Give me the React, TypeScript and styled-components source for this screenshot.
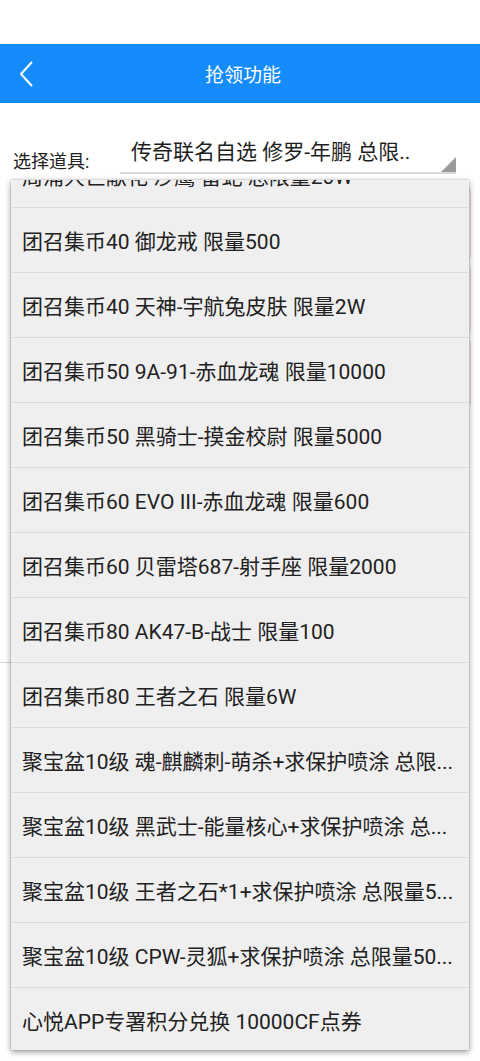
import React, { useLayoutEffect, useRef } from 'react';
import styled, { createGlobalStyle } from 'styled-components';

const GlobalStyle = createGlobalStyle`
  html, body {
    margin: 0;
    padding: 0;
    background: #ffffff;
  }
  body {
    font-family: Roboto, "Noto Sans CJK SC", "Noto Sans", sans-serif;
    color: #212121;
  }
  * {
    box-sizing: border-box;
  }
`;

const items = [
  "传奇联名自选 修罗-年鹏 总限量100",
  "周浦大巨献花 沙鹰 雷蛇 总限量20W",
  "团召集币40 御龙戒 限量500",
  "团召集币40 天神-宇航兔皮肤 限量2W",
  "团召集币50 9A-91-赤血龙魂 限量10000",
  "团召集币50 黑骑士-摸金校尉 限量5000",
  "团召集币60 EVO III-赤血龙魂 限量600",
  "团召集币60 贝雷塔687-射手座 限量2000",
  "团召集币80 AK47-B-战士 限量100",
  "团召集币80 王者之石 限量6W",
  "聚宝盆10级 魂-麒麟刺-萌杀+求保护喷涂 总限...",
  "聚宝盆10级 黑武士-能量核心+求保护喷涂 总...",
  "聚宝盆10级 王者之石*1+求保护喷涂 总限量5...",
  "聚宝盆10级 CPW-灵狐+求保护喷涂 总限量50...",
  "心悦APP专署积分兑换 10000CF点券",
];

const Page = styled.div`
  position: relative;
  width: 480px;
  min-height: 1061px;
  overflow: hidden;
`;

const StatusSpace = styled.div`
  height: 44px;
  background: #ffffff;
`;

const Header = styled.header`
  height: 59px;
  background: #168cfc;
  display: grid;
  grid-template-columns: 60px 1fr 60px;
  align-items: center;
`;

const BackButton = styled.button`
  border: none;
  background: transparent;
  padding: 0 0 0 19px;
  height: 100%;
  display: flex;
  align-items: center;
  cursor: pointer;
`;

const Title = styled.h1`
  margin: 0;
  text-align: center;
  color: #ffffff;
  font-size: 19px;
  font-weight: 400;
  padding-left: 6px;
`;

const Form = styled.div`
  padding: 32px 9px 0 13px;
`;

const SelectRow = styled.div`
  display: flex;
  align-items: flex-end;
  height: 39px;
`;

const Label = styled.span`
  font-size: 18px;
  width: 107px;
  line-height: 1;
  padding-bottom: 3px;
  color: #222;
`;

const SelectBox = styled.div`
  position: relative;
  width: 336px;
  height: 39px;
  border-bottom: 2px solid #d8d8d8;
  padding: 3px 0 0 11px;
  font-size: 21px;
  line-height: 28px;
  color: #1e1e1e;
  white-space: nowrap;
`;

const Caret = styled.span`
  position: absolute;
  right: 0;
  bottom: 0;
  width: 0;
  height: 0;
  border-left: 15px solid transparent;
  border-bottom: 15px solid #9a9a9a;
`;

const FieldList = styled.div`
  margin-top: 15px;
  display: flex;
  flex-direction: column;
  gap: 8px;
  padding-left: 107px;
`;

const Field = styled.div<{ $h: number }>`
  height: ${(p) => p.$h}px;
  border: 1px solid #e8d2d2;
  border-radius: 3px;
`;

const Divider = styled.div`
  margin-top: 257px;
  margin-left: -13px;
  width: 200px;
  height: 1px;
  background: #d2d2d2;
`;

const Dropdown = styled.div`
  position: absolute;
  top: 180px;
  left: 11px;
  width: 458px;
  height: 870px;
  background: #efefef;
  box-shadow: 0 2px 6px rgba(0, 0, 0, 0.4), 0 0 2px rgba(0, 0, 0, 0.2);
  overflow-y: auto;
  scrollbar-width: none;
  &::-webkit-scrollbar {
    display: none;
  }
`;

const Option = styled.div`
  height: 65px;
  display: flex;
  align-items: center;
  padding: 0 4px 0 11px;
  border-top: 1px solid #dcdcdc;
  font-size: 21px;
  color: #212121;
  white-space: nowrap;
  overflow: hidden;
  &:first-child {
    border-top: none;
  }
`;

const BackIcon = () => (
  <svg width="14" height="26" viewBox="0 0 14 26">
    <path d="M12.5 1.5 L2 13 L12.5 24.5" fill="none" stroke="#ffffff" strokeWidth="2" strokeLinecap="round" strokeLinejoin="round" />
  </svg>
);

export default function App() {
  const listRef = useRef<HTMLDivElement>(null);

  useLayoutEffect(() => {
    if (listRef.current) listRef.current.scrollTop = 103;
  }, []);

  return (
    <Page>
      <GlobalStyle />
      <StatusSpace />
      <Header>
        <BackButton>
          <BackIcon />
        </BackButton>
        <Title>抢领功能</Title>
        <span />
      </Header>
      <Form>
        <SelectRow>
          <Label>选择道具:</Label>
          <SelectBox>
            传奇联名自选 修罗-年鹏 总限..
            <Caret />
          </SelectBox>
        </SelectRow>
        <FieldList>
          <Field $h={70} />
          <Field $h={65} />
          <Field $h={65} />
        </FieldList>
        <Divider />
      </Form>
      <Dropdown ref={listRef}>
        {items.map((item, i) => (
          <Option key={i}>{item}</Option>
        ))}
      </Dropdown>
    </Page>
  );
}
